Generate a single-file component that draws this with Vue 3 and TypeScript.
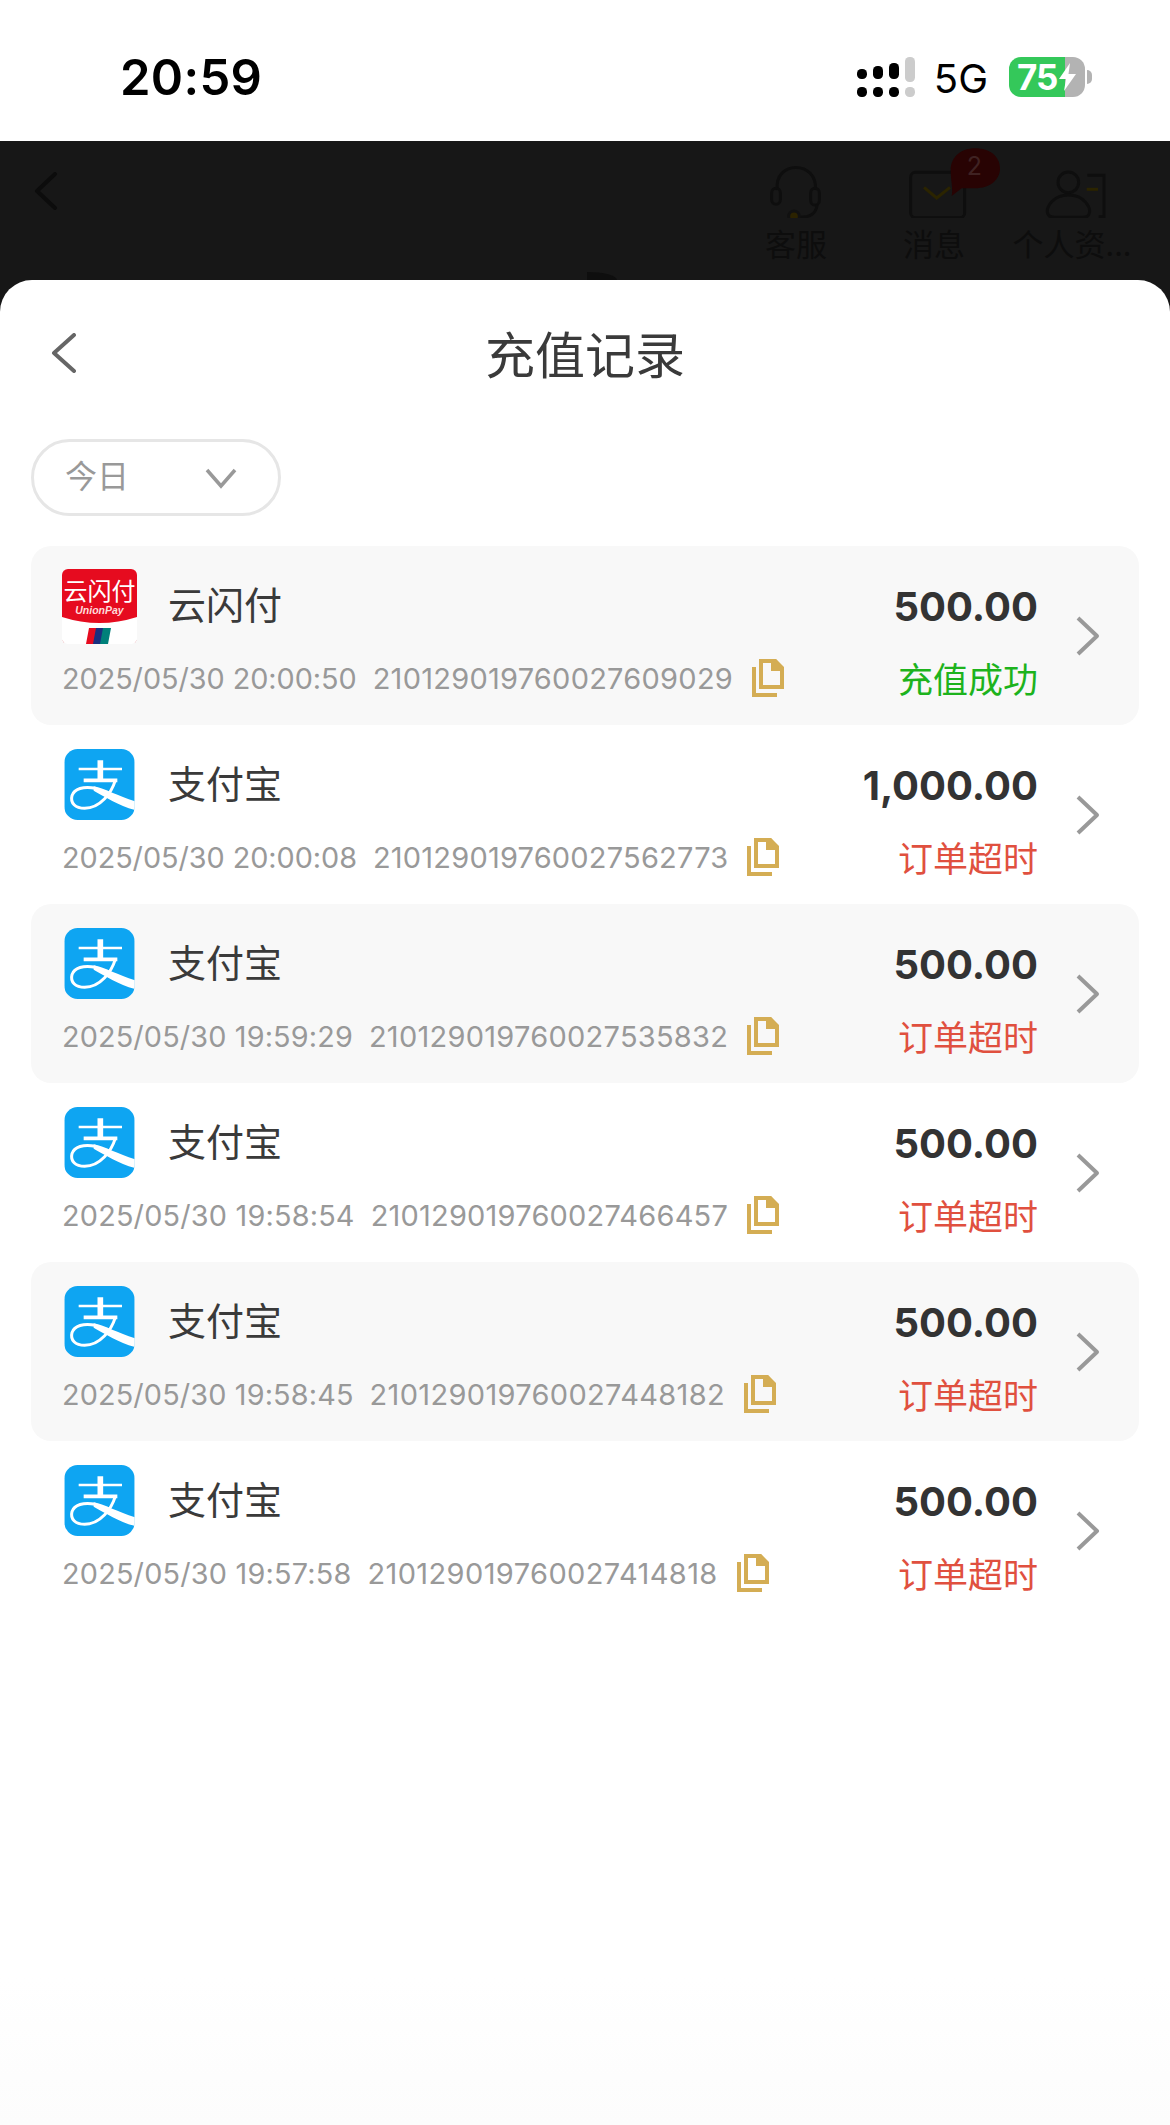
<script setup lang="ts">
interface Rec {
  kind: 'union' | 'ali'
  name: string
  time: string
  order: string
  amount: string
  status: string
  ok: boolean
  timeTrack: number
  orderTrack: number
}
const records: Rec[] = [
  { kind: 'union', name: '云闪付', time: '2025/05/30 20:00:50', order: '210129019760027609029', amount: '500.00', status: '充值成功', ok: true, timeTrack: -0.05, orderTrack: 0.25 },
  { kind: 'ali', name: '支付宝', time: '2025/05/30 20:00:08', order: '210129019760027562773', amount: '1,000.00', status: '订单超时', ok: false, timeTrack: -0.05, orderTrack: 0.2 },
  { kind: 'ali', name: '支付宝', time: '2025/05/30 19:59:29', order: '210129019760027535832', amount: '500.00', status: '订单超时', ok: false, timeTrack: 0.14, orderTrack: 0.26 },
  { kind: 'ali', name: '支付宝', time: '2025/05/30 19:58:54', order: '210129019760027466457', amount: '500.00', status: '订单超时', ok: false, timeTrack: 0.2, orderTrack: 0.2 },
  { kind: 'ali', name: '支付宝', time: '2025/05/30 19:58:45', order: '210129019760027448182', amount: '500.00', status: '订单超时', ok: false, timeTrack: 0.14, orderTrack: 0.33 },
  { kind: 'ali', name: '支付宝', time: '2025/05/30 19:57:58', order: '210129019760027414818', amount: '500.00', status: '订单超时', ok: false, timeTrack: 0.2, orderTrack: 0.39 },
]
</script>

<template>
  <div class="page">
    <div class="status-bar">
      <span class="clock">20:59</span>
      <div class="sys">
        <svg class="signal" width="58" height="40" viewBox="0 0 58 40">
          <rect x="0" y="12" width="10" height="10" rx="4.5" fill="#000" />
          <rect x="16" y="9" width="10" height="13" rx="4.5" fill="#000" />
          <rect x="32" y="6" width="10" height="16" rx="4.5" fill="#000" />
          <rect x="48" y="0" width="10" height="25" rx="4.5" fill="#ccc" />
          <rect x="0" y="30" width="10" height="10" rx="4.5" fill="#000" />
          <rect x="16" y="30" width="10" height="10" rx="4.5" fill="#000" />
          <rect x="32" y="30" width="10" height="10" rx="4.5" fill="#000" />
          <rect x="48" y="30" width="10" height="10" rx="4.5" fill="#ccc" />
        </svg>
        <span class="net">5G</span>
        <div class="battery">
          <div class="batt-body">
            <span class="batt-num">75</span>
            <svg class="bolt" width="17" height="28" viewBox="0 0 17 28">
              <path d="M11 0 L0 16 H7 L5 28 L17 11 H9.500 Z" fill="#fff" />
            </svg>
          </div>
          <span class="batt-nub"></span>
        </div>
      </div>
    </div>

    <div class="backdrop">
      <svg class="dim-back" width="26" height="38" viewBox="0 0 26 38">
        <path d="M22 2 L4 19 L22 36" fill="none" stroke="#0c0c0c" stroke-width="4" stroke-linecap="round" stroke-linejoin="round" />
      </svg>
      <div class="dim-nav">
        <div class="dim-item">
          <svg width="138" height="70" viewBox="-39 24 414 210" fill="none" stroke="#0e0e0e" stroke-width="9">
            <path d="M112 150 C100 60 235 60 226 150" />
            <rect x="95" y="145" width="26" height="48" rx="13" />
            <rect x="212" y="145" width="26" height="50" rx="13" />
            <path d="M232 195 C226 222 212 232 178 232" />
            <circle cx="162" cy="229" r="16" fill="#2b2200" stroke="#111" />
          </svg>
          <span>客服</span>
        </div>
        <div class="dim-item">
          <svg width="138" height="70" viewBox="375 24 414 210" fill="none" stroke="#0e0e0e" stroke-width="9">
            <rect x="512" y="97" width="162" height="136" rx="14" />
            <path d="M552 142 L590 174 L630 142" stroke="#2b2400" />
            <path d="M635 168 C640 150 632 120 632 90 C632 50 665 25 705 25 C750 25 780 50 780 85 C780 120 750 145 705 145 L665 145 Z" fill="#280303" stroke="none" />
            <text x="703" y="105" fill="#3f2222" stroke="none" font-family="Inter, sans-serif" font-size="75" text-anchor="middle">2</text>
          </svg>
          <span>消息</span>
        </div>
        <div class="dim-item">
          <svg width="138" height="70" viewBox="789 24 414 210" fill="none" stroke="#0e0e0e" stroke-width="9">
            <circle cx="985" cy="127" r="31" />
            <path d="M945 232 C915 232 917 205 935 185 C950 170 970 165 985 165 C1005 165 1025 172 1038 188 C1055 208 1052 232 1030 232 Z" />
            <path d="M1042 106 H1092 V230 H1076" />
            <path d="M1040 148 H1074" stroke="#2b2400" />
          </svg>
          <span>个人资...</span>
        </div>
      </div>
      <span class="dim-wedge"></span>
    </div>

    <main class="sheet">
      <header class="sheet-head">
        <svg class="head-back" width="26" height="40" viewBox="0 0 26 40">
          <path d="M23 2 L3 20 L23 38" fill="none" stroke="#666" stroke-width="4" stroke-linecap="round" stroke-linejoin="round" />
        </svg>
        <h1>充值记录</h1>
      </header>

      <div class="filter">
        <span class="filter-label">今日</span>
        <svg width="32" height="22" viewBox="0 0 32 22">
          <path d="M2 3 L16 19 L30 3" fill="none" stroke="#999" stroke-width="3.500" />
        </svg>
      </div>

      <ul class="list">
        <li v-for="(r, i) in records" :key="r.order" class="row" :class="{ shaded: i % 2 === 0 }">
          <div class="main">
            <div class="title-line">
              <svg v-if="r.kind === 'union'" class="logo" width="75" height="75" viewBox="0 0 75 75">
                <defs>
                  <clipPath id="uclip"><rect width="75" height="75" rx="6" /></clipPath>
                </defs>
                <g clip-path="url(#uclip)">
                  <rect width="75" height="75" fill="#fff" />
                  <path d="M0 0 H75 V48 Q37.500 60 0 48 Z" fill="#e60b1f" />
                  <text x="37.500" y="31" fill="#fff" font-family="'Noto Sans CJK SC', sans-serif" font-size="24" text-anchor="middle">云闪付</text>
                  <text x="37.500" y="45" fill="#ffdcdc" font-family="'Liberation Sans', sans-serif" font-size="10.500" font-style="italic" font-weight="700" text-anchor="middle">UnionPay</text>
                  <path d="M27 59 H37 L33 75 H24 Z" fill="#e60b1f" />
                  <path d="M34 59 H44 L40 75 H31 Z" fill="#1a2f7f" />
                  <path d="M41 59 H49 L46 75 H38 Z" fill="#00807a" />
                  <path d="M0 71 L3 75 H0 Z M75 71 L72 75 H75 Z" fill="#d93040" />
                </g>
              </svg>
              <svg v-else class="logo" width="75" height="75" viewBox="-10 25 225 225">
                <defs>
                  <clipPath id="aclip"><rect x="-3" y="28" width="211" height="213" rx="40" /></clipPath>
                </defs>
                <g clip-path="url(#aclip)">
                  <rect x="-3" y="28" width="211" height="213" fill="#0ea5f2" />
                  <path d="M40 88 H170" stroke="#fff" stroke-width="7" fill="none" />
                  <path d="M105 62 V122" stroke="#fff" stroke-width="17" fill="none" />
                  <path d="M55 122 H156" stroke="#fff" stroke-width="11" fill="none" />
                  <path d="M150 122 C138 160 105 206 58 206 C30 206 14 190 20 168 C26 148 55 138 90 146" stroke="#fff" stroke-width="9" fill="none" />
                  <path d="M85 140 C120 147 160 170 212 186 V212 C160 198 120 172 85 153 Z" fill="#fff" />
                </g>
              </svg>
              <span class="name">{{ r.name }}</span>
            </div>
            <div class="meta">
              <span class="time" :style="{ letterSpacing: r.timeTrack + 'px' }">{{ r.time }}</span>
              <span class="order" :style="{ letterSpacing: r.orderTrack + 'px' }">{{ r.order }}</span>
              <svg class="copy" width="33" height="38" viewBox="0 0 33 38">
                <path d="M2 8 V36 H25" fill="none" stroke="#d4ad54" stroke-width="4" />
                <path d="M9 2 H23 L30 10 V28 H9 Z" fill="none" stroke="#d4ad54" stroke-width="4" />
                <path d="M19 0 H24 L32 8 V12 H19 Z" fill="#d4ad54" />
              </svg>
            </div>
          </div>
          <div class="side">
            <span class="amount">{{ r.amount }}</span>
            <span class="state" :class="r.ok ? 'ok' : 'bad'">{{ r.status }}</span>
          </div>
          <svg class="go" width="24" height="40" viewBox="0 0 24 40">
            <path d="M2 2 L21 20 L2 38" fill="none" stroke="#999" stroke-width="4" stroke-linejoin="round" />
          </svg>
        </li>
      </ul>
    </main>
  </div>
</template>

<style scoped>
.page {
  width: 1170px;
  height: 2125px;
  overflow: hidden;
  display: flex;
  flex-direction: column;
  background: #171717;
  font-family: "Noto Sans CJK SC", sans-serif;
}
.status-bar {
  height: 141px;
  flex: none;
  background: #fff;
  box-sizing: border-box;
  padding: 0 78px 0 120px;
  display: flex;
  justify-content: space-between;
  align-items: flex-start;
}
.clock {
  margin-top: 48px;
  font-family: Inter, sans-serif;
  font-size: 49px;
  line-height: 60px;
  font-weight: 600;
  letter-spacing: 0.300px;
  color: #000;
}
.sys {
  margin-top: 57px;
  display: flex;
  align-items: flex-start;
}
.net {
  margin-left: 19px;
  font-family: Inter, sans-serif;
  font-size: 40px;
  line-height: 44px;
  color: #000;
}
.battery {
  margin-left: 21px;
  display: flex;
  align-items: center;
}
.batt-body {
  width: 76px;
  height: 40px;
  border-radius: 12px;
  background: linear-gradient(90deg, #34c85a 0 56px, #b3b3b3 56px);
  display: flex;
  align-items: center;
  padding-left: 8px;
  box-sizing: border-box;
}
.batt-num {
  font-family: Inter, sans-serif;
  font-size: 35px;
  line-height: 40px;
  font-weight: 700;
  color: #fff;
  letter-spacing: -1px;
}
.bolt {
  margin-left: 2px;
}
.batt-nub {
  width: 5px;
  height: 14px;
  margin-left: 2px;
  border-radius: 0 5px 5px 0;
  background: #b3b3b3;
}
.backdrop {
  height: 139px;
  flex: none;
  position: relative;
  display: flex;
  justify-content: space-between;
  align-items: flex-start;
}
.dim-back {
  margin: 31px 0 0 33px;
}
.dim-nav {
  display: flex;
  padding: 7px 29px 0 0;
}
.dim-item {
  width: 138px;
  display: flex;
  flex-direction: column;
  align-items: center;
}
.dim-item span {
  margin-top: 5px;
  font-size: 31px;
  line-height: 40px;
  color: #0d0d0d;
  white-space: nowrap;
}
.dim-wedge {
  position: absolute;
  left: 587px;
  top: 131px;
  width: 30px;
  height: 8px;
  border-top-right-radius: 100%;
  background: #0e0e0e;
}
.sheet {
  flex: 1;
  position: relative;
  background: linear-gradient(180deg, #fff 92%, #fcfcfc 100%);
  border-radius: 32px 32px 0 0;
  padding: 0 31px;
}
.sheet-head {
  height: 144px;
  padding-bottom: 6px;
  display: flex;
  align-items: center;
  justify-content: center;
  position: relative;
}
.head-back {
  position: absolute;
  left: 20px;
  top: 53px;
}
.sheet-head h1 {
  margin: 0;
  font-size: 50px;
  font-weight: 400;
  line-height: 60px;
  color: #3a3a3a;
}
.filter {
  margin-top: 9px;
  width: 250px;
  height: 77px;
  box-sizing: border-box;
  border: 3px solid #e6e6e6;
  border-radius: 39px;
  display: flex;
  align-items: center;
  justify-content: space-between;
  padding: 0 41px 0 31px;
  font-size: 32px;
  color: #999;
}
.filter-label {
  margin-top: -7px;
}
.list {
  list-style: none;
  margin: 30px 0 0;
  padding: 0;
}
.row {
  height: 179px;
  box-sizing: border-box;
  padding: 23px 39px 0 31px;
  border-radius: 20px;
  display: flex;
}
.shaded {
  background: #f8f8f8;
}
.main {
  flex: 1;
  min-width: 0;
}
.title-line {
  display: flex;
  align-items: center;
  height: 75px;
}
.logo {
  flex: none;
}
.name {
  margin-left: 31px;
  margin-top: -8px;
  font-size: 38px;
  line-height: 50px;
  color: #3a3a3a;
}
.meta {
  margin-top: 14px;
  height: 40px;
  display: flex;
  align-items: center;
  font-family: Inter, sans-serif;
  color: #999;
  white-space: nowrap;
}
.time {
  font-size: 28.800px;
}
.order {
  margin-left: 16px;
  font-size: 29px;
}
.copy {
  margin-left: 19px;
  flex: none;
}
.side {
  display: flex;
  flex-direction: column;
  align-items: flex-end;
  margin-right: 38px;
}
.amount {
  height: 75px;
  line-height: 75px;
  font-family: Inter, sans-serif;
  font-size: 40px;
  font-weight: 700;
  color: #333;
}
.state {
  margin-top: 12px;
  height: 44px;
  line-height: 44px;
  font-size: 35px;
}
.ok {
  color: #1db31d;
}
.bad {
  color: #e0503f;
}
.go {
  align-self: center;
  margin-top: -23px;
  flex: none;
}
</style>

<style>
html, body {
  margin: 0;
  background: #fff;
}
</style>
